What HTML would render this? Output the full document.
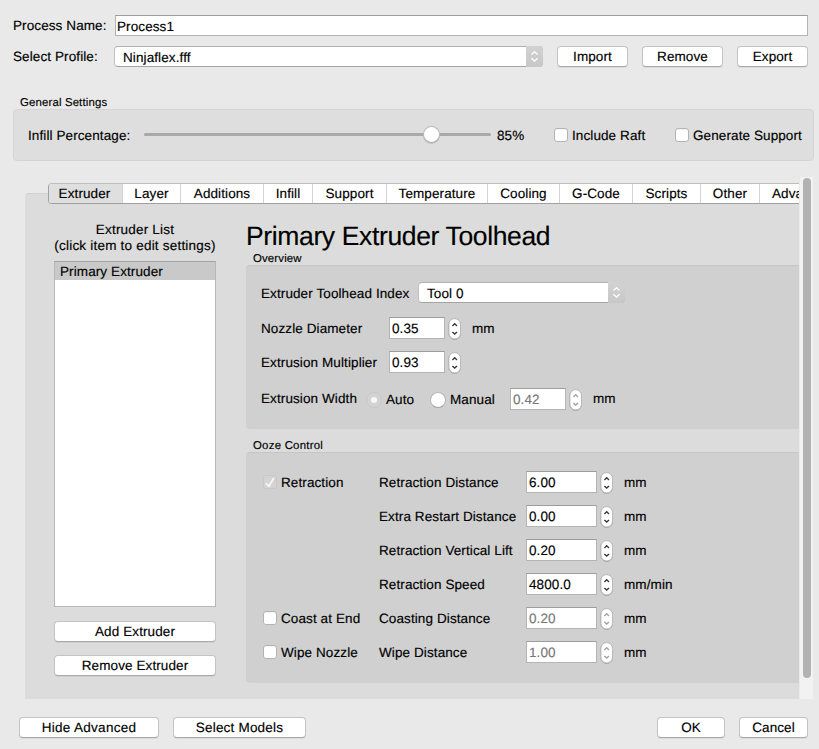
<!DOCTYPE html>
<html lang="en">
<head>
<meta charset="utf-8">
<title>FFF Settings</title>
<style>
*{box-sizing:border-box;margin:0;padding:0}
html,body{width:819px;height:749px;overflow:hidden}
body{position:relative;background:#e9e9e9;font-family:"Liberation Sans",sans-serif;font-size:13.5px;color:#000;line-height:16px;letter-spacing:.1px;text-rendering:geometricPrecision;-webkit-text-stroke:.16px #000}
.a{position:absolute;white-space:nowrap}
.t{position:absolute;white-space:nowrap;height:16px;line-height:16px;margin-top:1px}
.t.s{font-size:11.4px;letter-spacing:.15px;margin-top:1px}
.btn{position:absolute;height:21px;background:#fff;border:1px solid #c3c3c3;border-bottom-color:#a9a9a9;border-radius:4px;text-align:center;line-height:20px;box-shadow:0 1px 0 rgba(0,0,0,.06)}
.inp{position:absolute;background:#fff;border:1px solid #b4b4b4;border-top-color:#9d9d9d;line-height:21px;padding-left:2px;white-space:nowrap}
.inp.dis{color:#787878;-webkit-text-stroke-color:#787878}
.grp{position:absolute;background:#dedede;border:1px solid #d4d4d4;border-radius:4px}
.grp2{position:absolute;background:#d0d0d0;border-radius:4px 0 0 4px;border-top:1px solid #c6c6c6}
.cb{position:absolute;width:14px;height:14px;background:#fff;border:1px solid #b3b3b3;border-radius:3px;box-shadow:inset 0 1px 1px rgba(0,0,0,.05)}
.stp{position:absolute;width:13px;height:22px;background:#fff;border:1px solid #b9b9b9;border-radius:6px}
.stp svg,.sel svg{position:absolute;display:block}
.sel{position:absolute;height:21px;background:#fff;border:1px solid #c0c0c0;border-top-color:#b0b0b0;border-bottom-color:#a3a3a3;border-radius:4px;line-height:21px;padding-left:8px;white-space:nowrap}
.sel .cap{position:absolute;right:-1px;top:-1px;bottom:-1px;width:17px;background:linear-gradient(#d2d2d2,#c7c7c7);border-radius:0 4px 4px 0}
.tab{position:absolute;top:0;height:19px;line-height:20px;text-align:center;border-left:1px solid #d4d4d4;white-space:nowrap}
.tab.sel0{background:#dfdfdf;border-left:0}
</style>
</head>
<body>

<!-- top rows -->
<div class="t" style="left:13px;top:17px">Process Name:</div>
<div class="inp" style="left:115px;top:15px;width:693px;height:21px;padding-left:1px">Process1</div>
<div class="t" style="left:13px;top:48px">Select Profile:</div>
<div class="sel" style="left:114px;top:46px;width:429px">Ninjaflex.fff<span class="cap"><svg width="17" height="21" viewBox="0 0 17 21" style="left:0;top:0"><path d="M5.400 8.500 L8.500 5.800 L11.600 8.500 M5.400 12.300 L8.500 15.100 L11.600 12.300" fill="none" stroke="#fff" stroke-width="1.3"/></svg></span></div>
<div class="btn" style="left:557px;top:46px;width:71px">Import</div>
<div class="btn" style="left:642px;top:46px;width:81px">Remove</div>
<div class="btn" style="left:737px;top:46px;width:71px">Export</div>

<!-- general settings -->
<div class="t s" style="left:20px;top:94px">General Settings</div>
<div class="grp" style="left:13px;top:109px;width:801px;height:52px"></div>
<div class="t" style="left:28px;top:127px">Infill Percentage:</div>
<div class="a" style="left:144px;top:133px;width:347px;height:3px;background:#a9a9a9;border-radius:2px"></div>
<div class="a" style="left:423px;top:126px;width:17px;height:17px;background:#fff;border:1px solid #b9b9b9;border-bottom-color:#a6a6a6;border-radius:9px;box-shadow:0 1px 1px rgba(0,0,0,.12)"></div>
<div class="t" style="left:497px;top:127px">85%</div>
<div class="cb" style="left:554px;top:128px"></div>
<div class="t" style="left:572px;top:127px">Include Raft</div>
<div class="cb" style="left:675px;top:128px"></div>
<div class="t" style="left:693px;top:127px">Generate Support</div>

<!-- tab panel -->
<div class="a" style="left:800px;top:177px;width:13px;height:522px;background:#f2f2f2"></div>
<div class="a" style="left:803px;top:178px;width:8px;height:500px;background:#b2b2b2;border-radius:4px"></div>
<div class="a" style="left:25px;top:193px;width:774px;height:506px;background:#dcdcdc;border-top:1px solid #d0d0d0;border-radius:4px 0 0 0"></div>
<div class="a" id="tabs" style="left:48px;top:183px;width:751px;height:21px;overflow:hidden">
 <div class="a" style="left:0;top:0;width:820px;height:21px;background:#fff;border:1px solid #bdbdbd;border-left-color:#a2a2a2;border-bottom-color:#a0a0a0;border-radius:4px;overflow:hidden">
  <div class="tab sel0" style="left:-1px;width:74px;padding-right:1px">Extruder</div>
  <div class="tab" style="left:73px;width:58px">Layer</div>
  <div class="tab" style="left:131px;width:83px">Additions</div>
  <div class="tab" style="left:214px;width:49px">Infill</div>
  <div class="tab" style="left:263px;width:74px">Support</div>
  <div class="tab" style="left:337px;width:101px">Temperature</div>
  <div class="tab" style="left:438px;width:72px">Cooling</div>
  <div class="tab" style="left:510px;width:73px">G-Code</div>
  <div class="tab" style="left:583px;width:68px">Scripts</div>
  <div class="tab" style="left:651px;width:59px">Other</div>
  <div class="tab" style="left:710px;width:81px;text-align:left;padding-left:12px">Advanced</div>
 </div>
</div>

<!-- left column -->
<div class="t" style="left:35px;top:221px;width:200px;text-align:center;letter-spacing:.2px">Extruder List</div>
<div class="t" style="left:35px;top:237px;width:200px;text-align:center;letter-spacing:.21px">(click item to edit settings)</div>
<div class="a" style="left:54px;top:261px;width:162px;height:346px;background:#fff;border:1px solid #b7b7b7;border-top-color:#a3a3a3"></div>
<div class="a" style="left:55px;top:262px;width:160px;height:18px;background:#c9c9c9"></div>
<div class="t" style="left:60px;top:263px">Primary Extruder</div>
<div class="btn" style="left:54px;top:621px;width:162px">Add Extruder</div>
<div class="btn" style="left:54px;top:655px;width:162px">Remove Extruder</div>

<!-- overview -->
<div class="a" id="title" style="left:246px;top:220px;font-size:26.5px;line-height:32px;letter-spacing:-.36px">Primary Extruder Toolhead</div>
<div class="t s" style="left:253px;top:250px">Overview</div>
<div class="grp2" style="left:246px;top:265px;width:553px;height:164px"></div>
<div class="t" style="left:261px;top:285px">Extruder Toolhead Index</div>
<div class="sel" style="left:418px;top:282px;width:207px">Tool 0<span class="cap"><svg width="17" height="21" viewBox="0 0 17 21" style="left:0;top:0"><path d="M5.400 8.500 L8.500 5.800 L11.600 8.500 M5.400 12.300 L8.500 15.100 L11.600 12.300" fill="none" stroke="#fff" stroke-width="1.3"/></svg></span></div>
<div class="t" style="left:261px;top:320px">Nozzle Diameter</div>
<div class="inp" style="left:389px;top:317px;width:56px;height:22px">0.35</div>
<svg class="a stp2" style="left:448px;top:317px" width="14" height="24" viewBox="0 0 14 24"><rect x="0.9" y="2" width="11.600" height="20.400" rx="5.800" fill="#a0a0a0" stroke="#a0a0a0"/><rect x="0.9" y="1.600" width="11.600" height="20.400" rx="5.800" fill="#fff" stroke="#b9b9b9"/><path d="M4.4 8.900 L6.700 6.800 L9 8.900 M4.4 15 L6.700 17.100 L9 15" fill="none" stroke="#383838" stroke-width="1.4"/></svg>
<div class="t" style="left:472px;top:320px">mm</div>
<div class="t" style="left:261px;top:354px">Extrusion Multiplier</div>
<div class="inp" style="left:389px;top:351px;width:56px;height:22px">0.93</div>
<svg class="a stp2" style="left:448px;top:351px" width="14" height="24" viewBox="0 0 14 24"><rect x="0.9" y="2" width="11.600" height="20.400" rx="5.800" fill="#a0a0a0" stroke="#a0a0a0"/><rect x="0.9" y="1.600" width="11.600" height="20.400" rx="5.800" fill="#fff" stroke="#b9b9b9"/><path d="M4.4 8.900 L6.700 6.800 L9 8.900 M4.4 15 L6.700 17.100 L9 15" fill="none" stroke="#383838" stroke-width="1.4"/></svg>
<div class="t" style="left:261px;top:390px">Extrusion Width</div>
<div class="a" style="left:366px;top:392px;width:16px;height:16px;border-radius:8px;background:#d3d3d3;border:1px solid #c8c8c8"></div>
<div class="a" style="left:371px;top:397px;width:6px;height:6px;border-radius:3px;background:#f6f6f6"></div>
<div class="t" style="left:386px;top:391px">Auto</div>
<div class="a" style="left:430px;top:392px;width:16px;height:16px;border-radius:8px;background:#fff;border:1px solid #b6b6b6;border-bottom-color:#9f9f9f"></div>
<div class="t" style="left:450px;top:391px">Manual</div>
<div class="inp dis" style="left:510px;top:388px;width:56px;height:22px">0.42</div>
<svg class="a stp2" style="left:569px;top:388px" width="14" height="24" viewBox="0 0 14 24"><rect x="0.9" y="2" width="11.600" height="20.400" rx="5.800" fill="#a0a0a0" stroke="#a0a0a0"/><rect x="0.9" y="1.600" width="11.600" height="20.400" rx="5.800" fill="#fff" stroke="#b9b9b9"/><path d="M4.4 8.900 L6.700 6.800 L9 8.900 M4.4 15 L6.700 17.100 L9 15" fill="none" stroke="#a2a2a2" stroke-width="1.4"/></svg>
<div class="t" style="left:593px;top:390px">mm</div>

<!-- ooze control -->
<div class="t s" style="left:253px;top:437px;letter-spacing:.25px">Ooze Control</div>
<div class="grp2" style="left:246px;top:452px;width:553px;height:231px"></div>
<svg class="a" width="14" height="14" viewBox="0 0 14 14" style="left:263px;top:475px"><rect x="0.5" y="0.5" width="13" height="13" rx="2.500" fill="#d4d4d4" stroke="#c7c7c7"/><path d="M2.9 8.300 L5.900 11.200 L10.800 3" fill="none" stroke="#f8f8f8" stroke-width="1.7"/></svg>
<div class="t" style="left:281px;top:474px">Retraction</div>
<div class="t" style="left:379px;top:474px">Retraction Distance</div>
<div class="inp" style="left:526px;top:471px;width:71px;height:22px">6.00</div>
<svg class="a stp2" style="left:600px;top:471px" width="14" height="24" viewBox="0 0 14 24"><rect x="0.9" y="2" width="11.600" height="20.400" rx="5.800" fill="#a0a0a0" stroke="#a0a0a0"/><rect x="0.9" y="1.600" width="11.600" height="20.400" rx="5.800" fill="#fff" stroke="#b9b9b9"/><path d="M4.4 8.900 L6.700 6.800 L9 8.900 M4.4 15 L6.700 17.100 L9 15" fill="none" stroke="#383838" stroke-width="1.4"/></svg>
<div class="t" style="left:624px;top:474px">mm</div>
<div class="t" style="left:379px;top:508px">Extra Restart Distance</div>
<div class="inp" style="left:526px;top:505px;width:71px;height:22px">0.00</div>
<svg class="a stp2" style="left:600px;top:505px" width="14" height="24" viewBox="0 0 14 24"><rect x="0.9" y="2" width="11.600" height="20.400" rx="5.800" fill="#a0a0a0" stroke="#a0a0a0"/><rect x="0.9" y="1.600" width="11.600" height="20.400" rx="5.800" fill="#fff" stroke="#b9b9b9"/><path d="M4.4 8.900 L6.700 6.800 L9 8.900 M4.4 15 L6.700 17.100 L9 15" fill="none" stroke="#383838" stroke-width="1.4"/></svg>
<div class="t" style="left:624px;top:508px">mm</div>
<div class="t" style="left:379px;top:542px">Retraction Vertical Lift</div>
<div class="inp" style="left:526px;top:539px;width:71px;height:22px">0.20</div>
<svg class="a stp2" style="left:600px;top:539px" width="14" height="24" viewBox="0 0 14 24"><rect x="0.9" y="2" width="11.600" height="20.400" rx="5.800" fill="#a0a0a0" stroke="#a0a0a0"/><rect x="0.9" y="1.600" width="11.600" height="20.400" rx="5.800" fill="#fff" stroke="#b9b9b9"/><path d="M4.4 8.900 L6.700 6.800 L9 8.900 M4.4 15 L6.700 17.100 L9 15" fill="none" stroke="#383838" stroke-width="1.4"/></svg>
<div class="t" style="left:624px;top:542px">mm</div>
<div class="t" style="left:379px;top:576px" >Retraction Speed</div>
<div class="inp" style="left:526px;top:573px;width:71px;height:22px">4800.0</div>
<svg class="a stp2" style="left:600px;top:573px" width="14" height="24" viewBox="0 0 14 24"><rect x="0.9" y="2" width="11.600" height="20.400" rx="5.800" fill="#a0a0a0" stroke="#a0a0a0"/><rect x="0.9" y="1.600" width="11.600" height="20.400" rx="5.800" fill="#fff" stroke="#b9b9b9"/><path d="M4.4 8.900 L6.700 6.800 L9 8.900 M4.4 15 L6.700 17.100 L9 15" fill="none" stroke="#383838" stroke-width="1.4"/></svg>
<div class="t" style="left:624px;top:576px">mm/min</div>
<div class="t" style="left:379px;top:610px">Coasting Distance</div>
<div class="inp dis" style="left:526px;top:607px;width:71px;height:22px">0.20</div>
<svg class="a stp2" style="left:600px;top:607px" width="14" height="24" viewBox="0 0 14 24"><rect x="0.9" y="2" width="11.600" height="20.400" rx="5.800" fill="#a0a0a0" stroke="#a0a0a0"/><rect x="0.9" y="1.600" width="11.600" height="20.400" rx="5.800" fill="#fff" stroke="#b9b9b9"/><path d="M4.4 8.900 L6.700 6.800 L9 8.900 M4.4 15 L6.700 17.100 L9 15" fill="none" stroke="#a2a2a2" stroke-width="1.4"/></svg>
<div class="t" style="left:624px;top:610px">mm</div>
<div class="t" style="left:379px;top:644px">Wipe Distance</div>
<div class="inp dis" style="left:526px;top:641px;width:71px;height:22px">1.00</div>
<svg class="a stp2" style="left:600px;top:641px" width="14" height="24" viewBox="0 0 14 24"><rect x="0.9" y="2" width="11.600" height="20.400" rx="5.800" fill="#a0a0a0" stroke="#a0a0a0"/><rect x="0.9" y="1.600" width="11.600" height="20.400" rx="5.800" fill="#fff" stroke="#b9b9b9"/><path d="M4.4 8.900 L6.700 6.800 L9 8.900 M4.4 15 L6.700 17.100 L9 15" fill="none" stroke="#a2a2a2" stroke-width="1.4"/></svg>
<div class="t" style="left:624px;top:644px">mm</div>
<div class="cb" style="left:263px;top:611px"></div>
<div class="t" style="left:281px;top:610px">Coast at End</div>
<div class="cb" style="left:263px;top:645px"></div>
<div class="t" style="left:281px;top:644px">Wipe Nozzle</div>

<!-- bottom buttons -->
<div class="btn" style="left:19px;top:717px;width:140px;letter-spacing:.3px">Hide Advanced</div>
<div class="btn" style="left:173px;top:717px;width:133px;letter-spacing:.2px">Select Models</div>
<div class="btn" style="left:657px;top:717px;width:68px">OK</div>
<div class="btn" style="left:739px;top:717px;width:69px">Cancel</div>

</body>
</html>
